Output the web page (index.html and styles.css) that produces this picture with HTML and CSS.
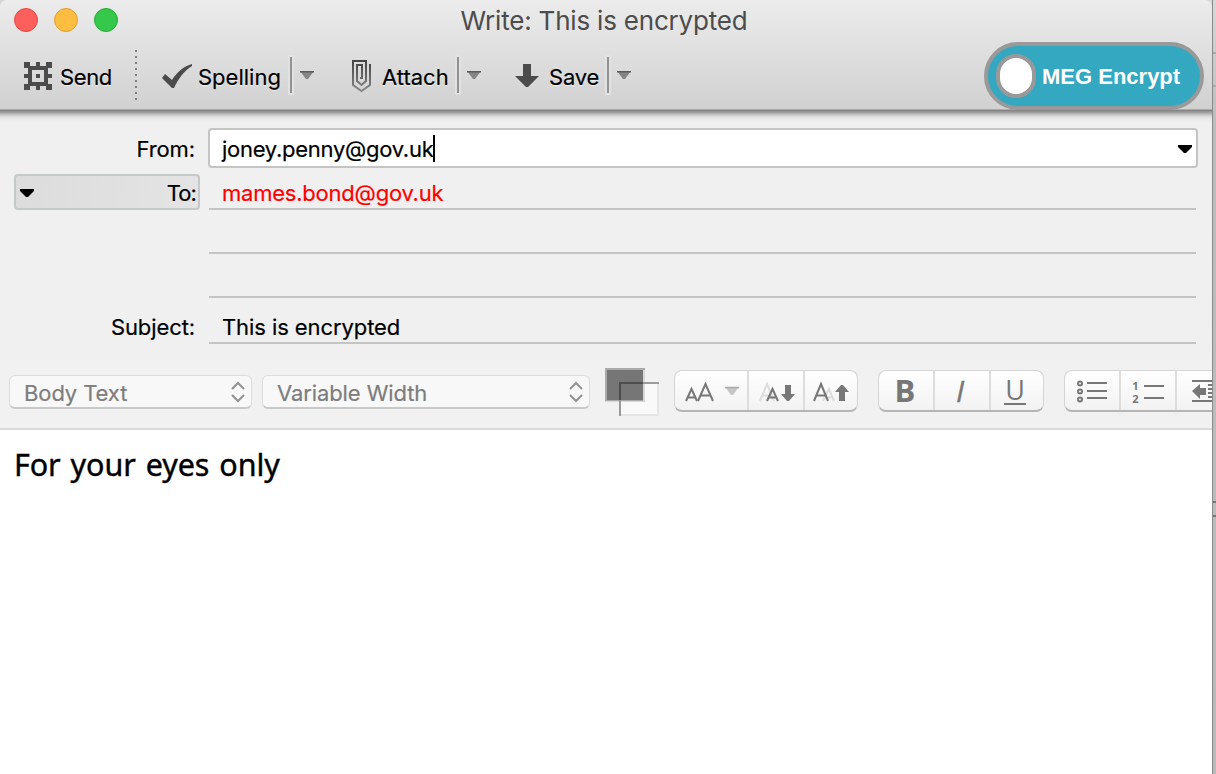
FILE: index.html
```html
<!DOCTYPE html>
<html lang="en">
<head>
<meta charset="utf-8">
<title>Write: This is encrypted</title>
<link rel="stylesheet" href="styles.css">
</head>
<body>
<div class="desktop">
<main class="window">
  <header class="chrome">
    <div class="titlebar">
      <div class="lights"><i class="light close"></i><i class="light minimise"></i><i class="light zoom"></i></div>
      <h1 class="title"><span>Write: This is encrypted</span></h1>
    </div>
    <div class="toolbar">
      <div class="tool send">
        <svg width="28" height="28" viewBox="0 0 28 28" fill="#4b4b4b"><path fill-rule="evenodd" d="M0 0H6V4H12V0H16V4H22V0H28V6H24V12H28V16H24V22H28V28H22V24H16V28H12V24H6V28H0V22H4V16H0V12H4V6H0ZM8 8V20H20V8Z"/><path d="M12 12h4v4h-4z"/></svg>
        <span class="label">Send</span>
      </div>
      <svg class="dots" width="2" height="52"><path d="M1 0V52" stroke="#7f7f7f" stroke-width="2" stroke-dasharray="2 4"/></svg>
      <div class="tool spelling">
        <svg width="30" height="25" viewBox="0 0 30 25"><path fill="#4b4b4b" d="M0 14L3 10 10 16C15 8 22 2 30 0V2C22 7 16 15 12 24H10Z"/></svg>
        <span class="label">Spelling</span><i class="rule"></i>
        <svg class="caret" width="14" height="9"><path d="M0 0H14L8 8H6Z" fill="#858585"/><path d="M0 .75H14" stroke="#5b5b5b" stroke-width="1.5"/></svg>
      </div>
      <div class="tool attach">
        <svg width="19" height="33" viewBox="0 0 19 33" fill="none" stroke="url(#clip)" stroke-width="2"><defs><linearGradient id="clip" gradientUnits="userSpaceOnUse" x1="0" y1="0" x2="0" y2="33"><stop stop-color="#424242"/><stop offset="1" stop-color="#8c8c8c"/></linearGradient></defs><path d="M18 4V25L9.500 31 1 25V1H14V21L9.500 25 5 21V5H10V18H8"/></svg>
        <span class="label">Attach</span><i class="rule"></i>
        <svg class="caret" width="14" height="9"><path d="M0 0H14L8 8H6Z" fill="#858585"/><path d="M0 .75H14" stroke="#5b5b5b" stroke-width="1.5"/></svg>
      </div>
      <div class="tool save">
        <svg width="24" height="24" viewBox="0 0 24 24"><path fill="#4b4b4b" d="M8 0H16V12H24L13 23H11L0 12H8Z"/></svg>
        <span class="label">Save</span><i class="rule"></i>
        <svg class="caret" width="14" height="9"><path d="M0 0H14L8 8H6Z" fill="#858585"/><path d="M0 .75H14" stroke="#5b5b5b" stroke-width="1.5"/></svg>
      </div>
      <button class="encrypt"><i class="knob"></i><span>MEG Encrypt</span></button>
    </div>
  </header>
  <section class="headers">
    <div class="row"><label class="name">From:</label>
      <div class="from"><span class="address">joney.penny@gov.uk</span><i class="cursor"></i>
        <svg width="14" height="8"><path d="M0 0H14V2L8 8H6L0 2Z"/></svg></div></div>
    <div class="row to-row"><div class="to"><svg width="14" height="8"><path d="M0 0H14V2L8 8H6L0 2Z"/></svg><span>To:</span></div>
      <div class="line recipient"><span>mames.bond@gov.uk</span></div></div>
    <div class="row blank"><span></span><div class="line"></div></div>
    <div class="row blank"><span></span><div class="line"></div></div>
    <div class="row subject"><label class="name">Subject:</label><div class="line"><span>This is encrypted</span></div></div>
  </section>
  <section class="format">
    <div class="select style"><span>Body Text</span><svg width="14" height="22" viewBox="0 0 14 22"><path d="M1 8L7 2 13 8M1 14L7 20 13 14"/></svg></div>
    <div class="select font"><span>Variable Width</span><svg width="14" height="22" viewBox="0 0 14 22"><path d="M1 8L7 2 13 8M1 14L7 20 13 14"/></svg></div>
    <svg class="colours" width="54" height="48" viewBox="0 0 54 48"><path fill="#aaa" d="M0 0H40V2L38 34H0Z"/><path fill="#d8d8d8" d="M38 2h2v32H0v-1h38z"/><path fill="#767676" d="M2 2H38V32H2Z"/><path fill="#f9f9f9" d="M38 16H52V46H16V34H40V16Z"/><path fill="none" stroke="#e5e5e5" stroke-width="2" d="M53 16V47H15"/><path fill="none" stroke="#9a9a9a" stroke-width="2" d="M38 15H54M15 32V48"/><path fill="none" stroke="#4d4d4d" stroke-width="2" d="M15 32V15H38"/></svg>
    <div class="group sizes">
      <div class="cell"><svg width="72" height="40" viewBox="0 0 72 40"><g fill="none" stroke="#777" stroke-width="2"><path d="M11 30L16.500 18 22 30M13 26.500H20"/><path d="M23 30L30.500 13 38 30M26 24.500H35"/></g><path fill="#c6c6c6" d="M50 16H64L58 24H56Z"/><path stroke="#aaa" stroke-width="1.500" d="M50 16.500H64"/></svg></div>
      <div class="cell"><svg width="54" height="40" viewBox="0 0 54 40"><g fill="none" stroke-width="2"><path stroke="#ddd" d="M11 30L18 13 25 30M13 24.500H23"/><path stroke="#777" d="M18 30L23.500 18 29 30M20 26.500H27"/></g><path fill="#777" d="M36 14H42V23H46L40 30H38L32 23H36Z"/></svg></div>
      <div class="cell"><svg width="53" height="40" viewBox="0 0 53 40"><g fill="none" stroke-width="2"><path stroke="#ddd" d="M18 30L24 18 29 30M20 26.500H27"/><path stroke="#777" d="M9 30L16 13 23 30M11.500 24.500H21"/></g><path fill="#777" d="M34 30H40V21H44L38 14H36L30 21H34Z"/></svg></div>
    </div>
    <div class="group marks">
      <div class="cell"><b>B</b></div><div class="cell"><em>I</em></div>
      <div class="cell"><span class="underlined">U</span></div>
    </div>
    <div class="group lists">
      <div class="cell"><svg width="54" height="40" viewBox="0 0 54 40" fill="none" stroke="#777" stroke-width="2"><circle cx="15" cy="12.500" r="2"/><circle cx="15" cy="20.500" r="2"/><circle cx="15" cy="28.500" r="2"/><path d="M22 12H42M22 20H42M22 27H42"/></svg></div>
      <div class="cell"><span class="digits"><span>1</span><span>2</span></span><svg width="20" height="40"><path d="M0 15H20M0 27H20" stroke="#777" stroke-width="2"/></svg></div>
      <div class="cell"><svg width="54" height="40" viewBox="0 0 54 40"><path fill="none" stroke="#777" stroke-width="2" d="M15 10H45M15 30H45M31 14H45M31 18H45M31 22H45M31 26H45"/><path fill="#777" d="M15 20L23 13V17H29V24H23V28Z"/></svg></div>
    </div>
  </section>
  <article class="editor"><p>For your eyes only</p></article>
</main>
<aside class="behind"><i></i><i></i><i></i><i></i></aside>
</div>
</body>
</html>
```

FILE: styles.css
```css
* { box-sizing: border-box; }
body { margin: 0; overflow: hidden; font-family: Inter, sans-serif; font-size: 22px; color: #000; background: #b9b9b9; }
svg { display: block; flex: none; }
i { display: block; flex: none; }
.desktop { display: flex; width: 1216px; height: 774px; background: #d8d8d8; }
.window { width: 1212px; height: 774px; display: flex; flex-direction: column; overflow: hidden; background: #f0f0f0; border-radius: 8px 8px 0 0; }
.chrome { height: 110px; flex: none; background: linear-gradient(#ececec, #d1d1d1); border-bottom: 1px solid #aaa; }
.titlebar { height: 42px; display: grid; grid-template-columns: 132px 944px 136px; }
.lights { display: flex; gap: 16px; padding: 8px 14px; }
.light { width: 24px; height: 24px; border-radius: 50%; border: 1px solid; }
.close { background: #fd605c; border-color: #e34845; }
.minimise { background: #fdbd40; border-color: #de9f33; }
.zoom { background: #35c84a; border-color: #27aa35; }
.title { margin: 0; text-align: center; font-size: 26px; line-height: 42px; font-weight: 400; color: #4c4c4c; letter-spacing: -.2px; white-space: nowrap; }
.toolbar { height: 68px; display: flex; align-items: center; padding-left: 24px; }
.tool { display: flex; align-items: center; height: 68px; flex: none; }
.label { white-space: nowrap; text-shadow: 0 1px 1px #f4f4f4; line-height: 28px; padding-top: 2px; letter-spacing: -.4px; -webkit-text-stroke: .2px #000; }
.send { width: 111px; gap: 8px; }
.dots { margin-right: 25px; }
.spelling, .attach, .save { gap: 6px; }
.spelling { width: 190px; }
.spelling .label { width: 86px; letter-spacing: 0; }
.attach { width: 163px; gap: 11px; }
.attach .label { width: 63px; letter-spacing: 0; }
.save { width: 469px; gap: 10px; }
.save .label { width: 48px; letter-spacing: -.2px; }
.rule { width: 2px; height: 36px; background: #929292; box-shadow: 0 0 0 2px #e2e2e2; margin-top: -3px; }
.attach .rule { margin-left: 1px; }
.attach .caret { margin-left: -3px; }
.save .caret { margin-left: -2px; }
.spelling .caret { margin-left: 2px; }
.caret { margin-top: -2px; }
.encrypt { width: 220px; height: 68px; flex: none; display: flex; align-items: center; gap: 6px; padding: 0 0 0 8px; border: 4px solid #999; border-radius: 34px; background: #34a7c1; color: #fff; font: bold 22px "Liberation Sans", Arial, sans-serif; white-space: nowrap; z-index: 1; }
.encrypt span { padding-top: 1px; }
.knob { width: 40px; height: 44px; border: 4px solid #999; border-radius: 20px; background: #fff; }
.headers { height: 249px; flex: none; padding: 18px 14px 0; background: linear-gradient(#7d7d7d 0, #a9a9a9 3px, #d7d7d7 6px, #ebebeb 9px, #f0f0f0 13px); }
.row { display: grid; grid-template-columns: 186px 990px; grid-template-rows: 100%; column-gap: 8px; height: 40px; }
.name { text-align: right; padding-right: 5px; line-height: 42px; letter-spacing: -.1px; -webkit-text-stroke: .2px #000; }
.from { height: 40px; background: #fff; border: 2px solid #c4c4c4; border-radius: 4px; display: flex; align-items: center; padding: 0 4px 0 12px; -webkit-text-stroke: .2px #000; }
.from svg { margin-left: auto; margin-top: 2px; }
.address { letter-spacing: -.27px; padding-top: 2px; }
.cursor { width: 2px; height: 27px; background: #000; }
.to-row { margin-top: 6px; height: 36px; }
.to { display: flex; align-items: center; justify-content: space-between; border: 2px solid #c5c9c8; border-radius: 4px; background: linear-gradient(100deg, #dcdcdc, #e4e4e4); padding: 0 2px 0 4px; letter-spacing: -.9px; -webkit-text-stroke: .2px #000; }
.to span { padding-top: 2px; }
.to svg { margin-top: 2px; }
.line { border-bottom: 2px solid #c4c4c4; margin: 0 2px 0 1px; padding-left: 13px; letter-spacing: -.08px; -webkit-text-stroke: .2px currentColor; }
.recipient { color: #f00; line-height: 38px; letter-spacing: -.22px; }
.blank { height: 44px; }
.subject { height: 46px; }
.subject .name, .subject .line { line-height: 58px; }
.format { height: 71px; flex: none; display: flex; border-bottom: 2px solid #dadada; background: #f1f1f1; padding: 9px 0 0 9px; }
.select { height: 34px; margin-top: 7px; flex: none; display: flex; align-items: center; justify-content: space-between; padding: 2px 6px 0 14px; border: 1px solid #dcdcdc; border-bottom: 2px solid #c9c9c9; border-radius: 6px; background: #f8f8f8; color: #7d7d7d; white-space: nowrap; letter-spacing: -.1px; -webkit-text-stroke: .2px #7d7d7d; }
.select svg { fill: none; stroke: #929292; stroke-width: 2; margin-top: -2px; }
.style { width: 243px; margin-right: 10px; }
.font { width: 328px; margin-right: 15px; }
.colours { margin-right: 15px; }
.group { display: flex; height: 42px; margin-top: 2px; flex: none; border: 1px solid #d5d5d5; border-bottom: 2px solid #b5b5b5; border-radius: 8px; background: linear-gradient(#fff, #f2f2f2); color: #777; }
.cell { display: flex; align-items: center; justify-content: center; width: 56px; height: 39px; border-right: 2px solid #ddd; flex: none; }
.cell:last-child { border-right: 0; width: 53px; }
.sizes { width: 184px; margin-right: 20px; }
.sizes .cell:first-child { width: 74px; }
.sizes .cell:last-child { width: 52px; }
.marks { width: 166px; margin-right: 20px; }
.marks b { font: bold 31px "Open Sans", sans-serif; line-height: 36px; margin: -2px 2px 0 0; }
.marks em { font: italic 30px "Open Sans", sans-serif; line-height: 38px; margin-right: 4px; -webkit-text-stroke: .4px #777; }
.underlined { font: 27px "Open Sans", sans-serif; line-height: 23px; height: 27px; width: 22px; margin: 2px 5px 0 0; text-align: center; border-bottom: 2px solid #777; }
.lists { width: 168px; }
.digits { display: flex; flex-direction: column; font: bold 11px/13px "Open Sans", sans-serif; margin-right: 5px; padding-top: 2px; }
.editor { flex: 1; background: #fff; padding: 10px 14px; }
.editor p { margin: 0; font: 30.5px/48px "Noto Sans", sans-serif; letter-spacing: -.1px; word-spacing: 2.2px; white-space: nowrap; -webkit-text-stroke: .4px #000; }
.behind { width: 4px; height: 774px; display: grid; grid-template-rows: 54px 33px 416px 14px; background: linear-gradient(#d8d8d8, #bdbdbd 120px, #b9b9b9); border-left: 1px solid #8a8a8a; }
.behind i { border-bottom: 2px solid #aaa; }
.behind i:nth-child(n+3) { border-bottom-color: #777; }
```
